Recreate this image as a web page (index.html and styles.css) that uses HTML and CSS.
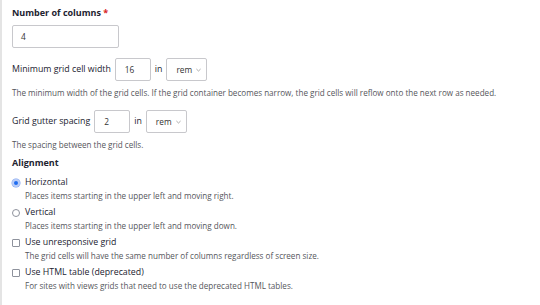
FILE: index.html
```html
<!DOCTYPE html>
<html>
<head>
<meta charset="utf-8">
<link rel="stylesheet" href="styles.css">
</head>
<body>
<div class="panel">
  <div class="field first">
    <div class="label-strong">Number of columns <span class="req">*</span></div>
    <div class="input wide">4</div>
  </div>
  <div class="field">
    <div class="inline-row">
      <span class="label">Minimum grid cell width</span>
      <span class="input num">16</span>
      <span class="label">in</span>
      <span class="select"><span>rem</span><svg class="chev" width="5" height="4" viewBox="0 0 5 4"><path d="M0.4 1 L2.5 3 L4.6 1" fill="none" stroke="#888" stroke-width="0.7"/></svg></span>
    </div>
    <div class="desc">The minimum width of the grid cells. If the grid container becomes narrow, the grid cells will reflow onto the next row as needed.</div>
  </div>
  <div class="field">
    <div class="inline-row">
      <span class="label">Grid gutter spacing</span>
      <span class="input num">2</span>
      <span class="label">in</span>
      <span class="select"><span>rem</span><svg class="chev" width="5" height="4" viewBox="0 0 5 4"><path d="M0.4 1 L2.5 3 L4.6 1" fill="none" stroke="#888" stroke-width="0.7"/></svg></span>
    </div>
    <div class="desc">The spacing between the grid cells.</div>
  </div>
  <div class="group-title">Alignment</div>
  <div class="option">
    <div class="opt-row"><span class="radio checked"></span><span class="label">Horizontal</span></div>
    <div class="desc sub">Places items starting in the upper left and moving right.</div>
  </div>
  <div class="option">
    <div class="opt-row"><span class="radio"></span><span class="label">Vertical</span></div>
    <div class="desc sub">Places items starting in the upper left and moving down.</div>
  </div>
  <div class="option">
    <div class="opt-row"><span class="check"></span><span class="label">Use unresponsive grid</span></div>
    <div class="desc sub">The grid cells will have the same number of columns regardless of screen size.</div>
  </div>
  <div class="option">
    <div class="opt-row"><span class="check"></span><span class="label">Use HTML table (deprecated)</span></div>
    <div class="desc sub">For sites with views grids that need to use the deprecated HTML tables.</div>
  </div>
</div>
</body>
</html>
```
FILE: styles.css
```css
html, body {
  margin: 0;
  padding: 0;
  background: #fff;
}
body {
  font-family: "Open Sans", "Noto Sans", sans-serif;
  color: #222330;
  width: 540px;
  height: 305px;
  overflow: hidden;
}
.panel {
  border-left: 2px solid #e4e4e4;
  padding: 6px 0 0 10px;
  height: 305px;
  box-sizing: border-box;
}
.field {
  margin-bottom: 11px;
}
.field.first {
  margin-bottom: 10px;
}
.label-strong {
  font-size: 9px;
  font-weight: 700;
  line-height: 14px;
  margin-bottom: 5px;
}
.req {
  color: #d72222;
}
.label {
  font-size: 8.8px;
  line-height: 13px;
}
.input {
  box-sizing: border-box;
  border: 1px solid #c8c8cc;
  border-radius: 2px;
  background: #fff;
  font-size: 8.3px;
  height: 23px;
  line-height: 21px;
  padding: 0 8px;
  color: #333;
}
.wide {
  width: 107px;
}
.num {
  width: 36px;
  display: inline-block;
  padding-left: 9px;
}
.inline-row {
  display: flex;
  align-items: center;
  gap: 4px;
  margin-bottom: 6px;
}
.select {
  box-sizing: border-box;
  display: inline-flex;
  align-items: center;
  justify-content: space-between;
  border: 1px solid #c8c8cc;
  border-radius: 2px;
  height: 23px;
  width: 41px;
  padding: 0 5px 0 9px;
  font-size: 8.3px;
  line-height: 21px;
  color: #333;
}
.chev {
  display: block;
}
.desc {
  font-size: 8.1px;
  line-height: 12px;
  color: #55565b;
}
.group-title {
  font-size: 9px;
  font-weight: 700;
  line-height: 14px;
  margin-top: -6px;
  margin-bottom: 6px;
}
.option {
  margin-bottom: 4px;
}
.opt-row {
  display: flex;
  align-items: center;
  gap: 5px;
  height: 13px;
}
.desc.sub {
  padding-left: 13px;
  margin-top: 1px;
}
.radio {
  box-sizing: border-box;
  width: 8px;
  height: 8px;
  border-radius: 50%;
  border: 1px solid #8e929c;
  background: #fff;
  display: inline-block;
}
.radio.checked {
  border: 2px solid #b9cdf7;
  background: #1e6cf0;
  box-shadow: 0 0 0 0.5px #7ea2f0;
}
.check {
  box-sizing: border-box;
  width: 8px;
  height: 8px;
  border-radius: 1px;
  border: 1px solid #8e929c;
  background: #fff;
  display: inline-block;
}
```
